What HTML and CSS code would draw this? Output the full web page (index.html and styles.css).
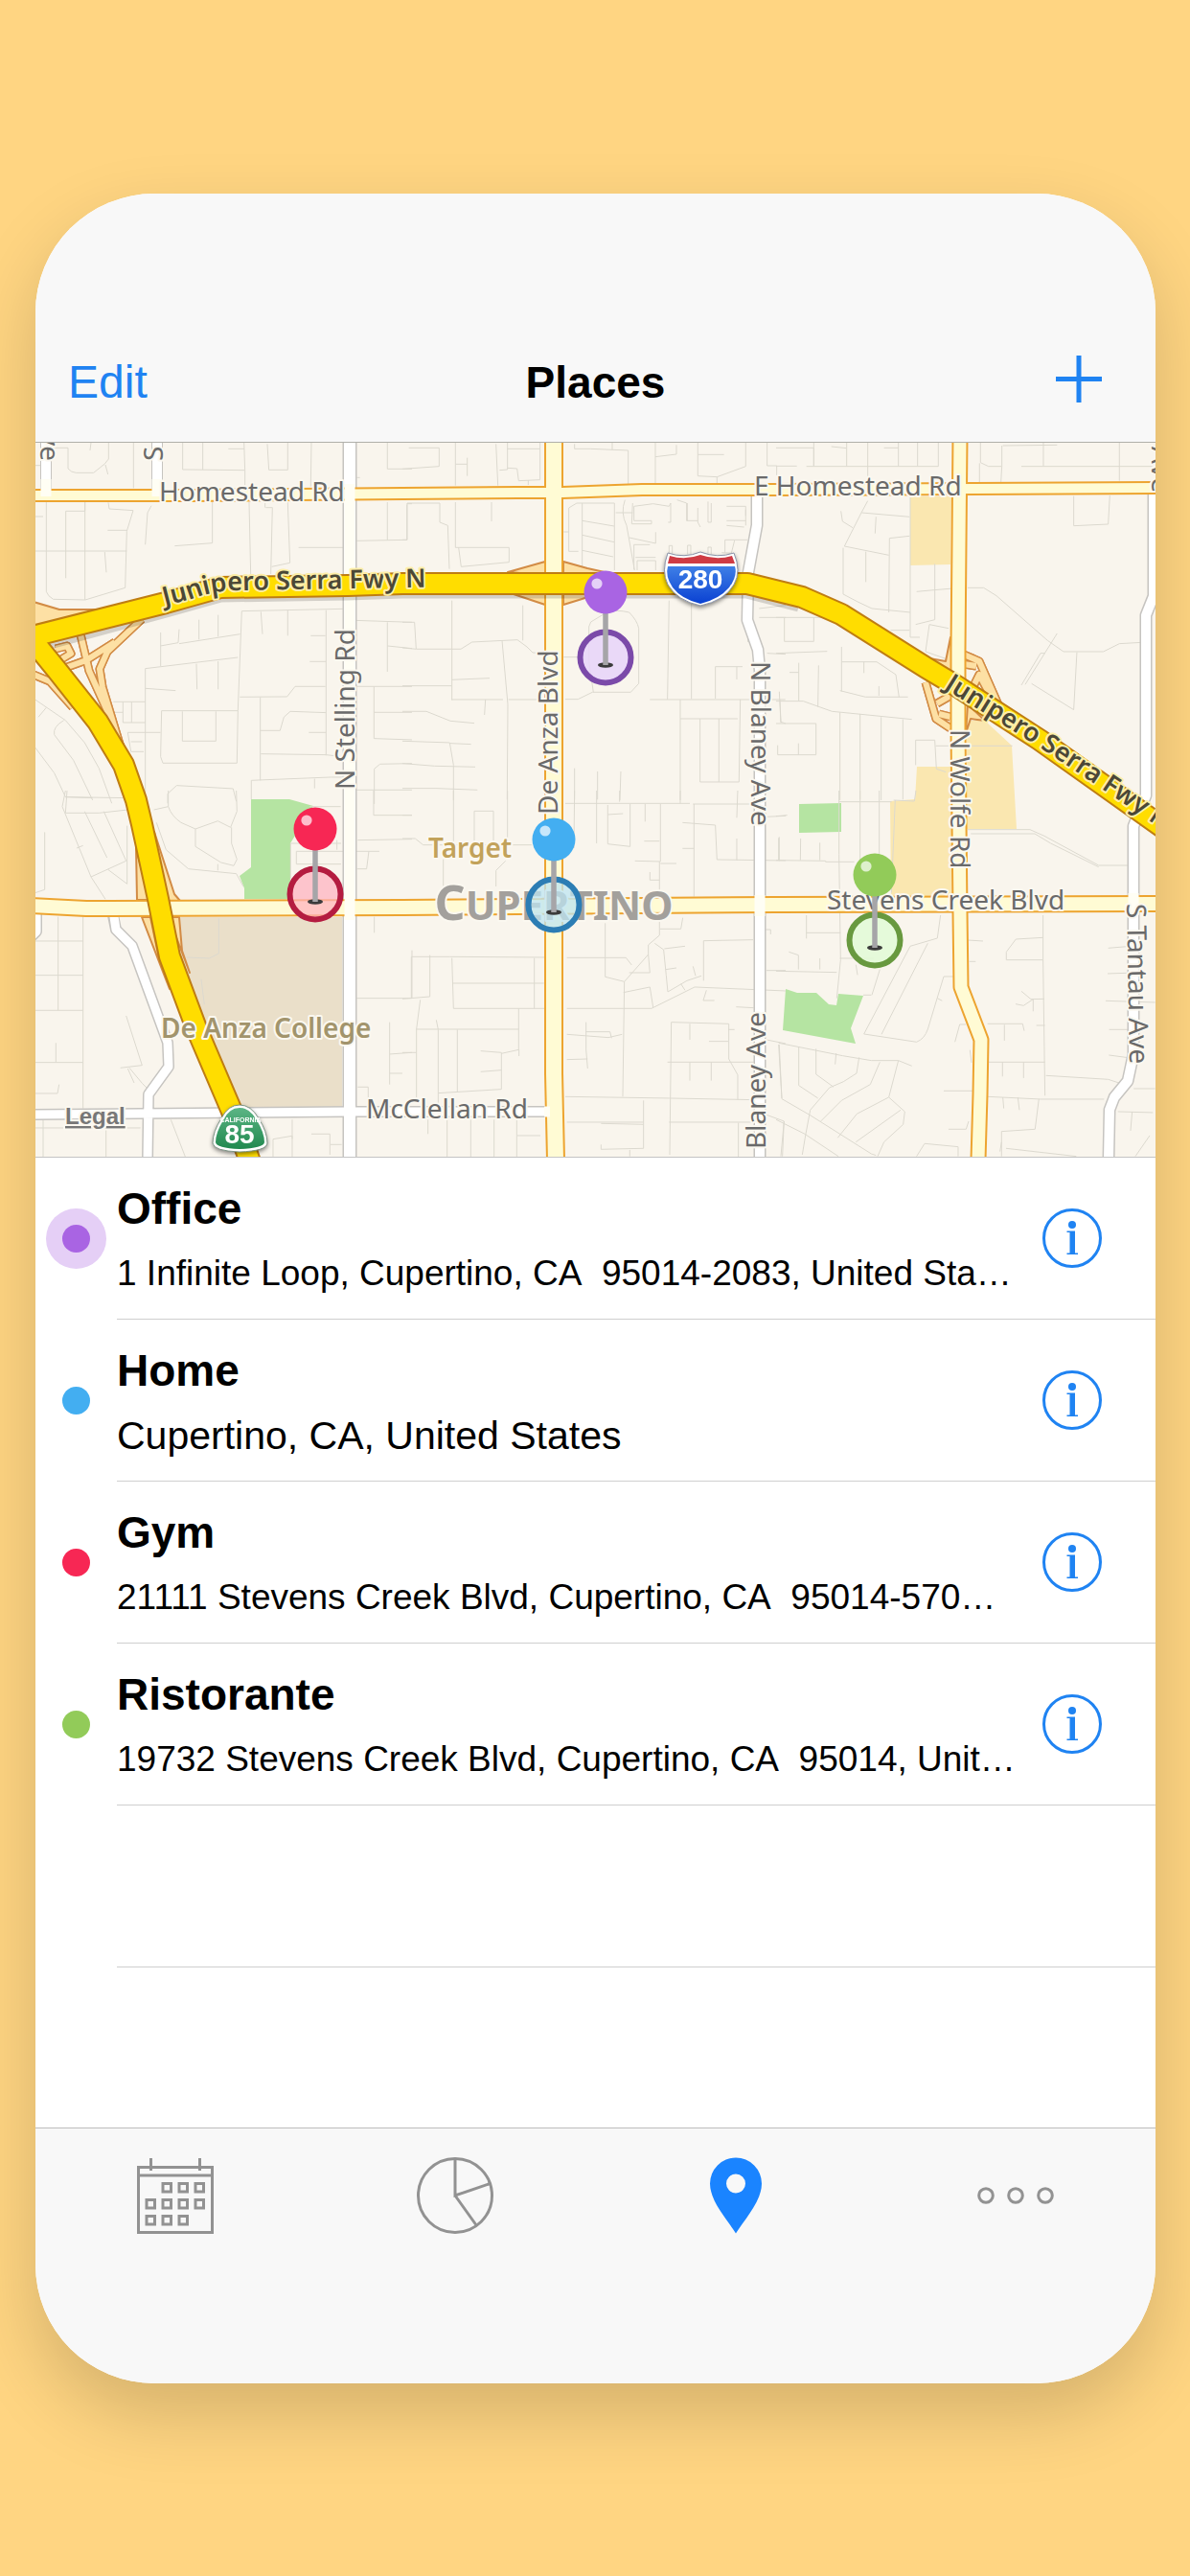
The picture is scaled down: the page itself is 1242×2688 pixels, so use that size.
FILE: index.html
```html
<!DOCTYPE html>
<html lang="en">
<head>
    <meta charset="UTF-8">
    <meta name="viewport" content="width=device-width, initial-scale=1.0">
    <title>Places</title>
    <link rel="stylesheet" href="styles.css">
</head>
<body>

<div class="phone">
    <header class="navbar">
        <button class="nav-edit" type="button">Edit</button>
        <h1>Places</h1>
        <button class="nav-add" type="button" aria-label="Add place">
            <svg viewBox="0 0 48 56"><path d="M24 0v49M0 24.500h48"/></svg>
        </button>
    </header>

    <!-- map -->
    <svg class="map" viewBox="37 462 1169 745" role="img" aria-label="Map of Cupertino">
        <defs>
            <linearGradient id="blueShield" x1="0" y1="0" x2="0" y2="1">
                <stop offset="0" stop-color="#3f7fe6"/>
                <stop offset="1" stop-color="#0a41d2"/>
            </linearGradient>
            <linearGradient id="greenShield" x1="0" y1="0" x2="0" y2="1">
                <stop offset="0" stop-color="#5cb585"/>
                <stop offset="1" stop-color="#21894f"/>
            </linearGradient>
            <symbol id="pin" overflow="visible">
                <circle class="pin-ring" r="26.500"/>
                <ellipse cy="8" rx="8" ry="2.700" fill="#3b3b3b"/>
                <path d="M0-48V8" stroke="#a6a5a8" stroke-width="5.500"/>
                <circle class="pin-head" cy="-68" r="22.500"/>
                <circle cx="-9" cy="-77" r="5.600" fill="#fff" opacity=".7"/>
            </symbol>
            <path id="fwyWest" d="M172 632L203 624Q225 616 250 616L480 612"/>
            <path id="fwyEast" d="M985 718L1093 785L1290 917"/>
        </defs>

        <!-- areas -->
        <path class="park" d="M262 834H302L327 841L303 880V938H255V927L250 914L262 905ZM834 839L878 838V868L834 869ZM820 1032L832 1036H852L865 1048L873 1049L875 1037L901 1039L888 1073L893 1089L817 1075Z"/>
        <path class="campus" d="M186 957H357V1156H246L188 1000Z"/>
        <path class="mall" d="M950 518H993L992 589L950 590ZM957 800H993V936H930L929 836L955 834ZM1009 752H1028L1056 778L1061 865H1009Z"/>

        <!-- minor streets -->
        <g class="minor" transform="translate(30 455) scale(.3333)">
            <path d="M75 37h48v65q10 12 25 13h55l35-28 12-15V18M192 45l3-25M328 18v145M240 90l8 30M20 92h20M482 18v87l195 2-3-89M545 18v87M625 40h50M677 107v50M747 25l5 81h59V18M885 18l-2 140M1123 18v85h77M1027 130h10"/>
            <path d="M20 252h25M55 207v280q5 15 22 24l100 2 125-38 5-177 20-65-75-5-3-20M116 235v210M116 235h60V207M176 207v306M20 360h287M247 295h60M238 363l5 64M365 340l7-100 12-22M457 344l118-9V207M690 207l5 225M742 224h21l-5 208M740 210v14M811 207l7 190-57 12M845 349h143M1027 328l157-3V215M1123 207v118M1184 212h16"/>
            <path d="M667 548l320-7M667 548l-12 312-3 164H420l-7-20 3-144h239M413 615v105M413 657l55-10 3-42M471 650l191-30M533 575v62M593 560v68M365 728l290-35M365 728v410M525 713l2 80M593 705v88M365 790l95 7M727 550l5 70M811 545v80M883 625h46M931 545v455M880 706h51M661 817l148-1 25-32h95M1027 784h173M1081 784v163l119 4M1081 865h119M1017 577l183 6M1123 583v155M1123 657l77 8M725 818v260M725 922h62l12-42 20-18 112 4M877 928h54M727 995l204 3 45 5M697 1138v-60l250-10h35M895 1073v30M1200 1025l-100 2-18 15v110M1027 1108h173"/>
            <path d="M265 832h100M295 832v65h70M265 865h30M322 832v65M481 862v93h105v-93M310 928h103M310 928l10 60h40M320 957h35M30 880l25-30M20 825l95 65 60 70 45 80 40 110M110 890q-35 20-30 45l60 80 60 125M20 975l60 80 35 75 85 3M435 1150v-30l28-26 177 10 10 40"/>
        </g>
        <g class="minor" transform="translate(420 455) scale(.3333)">
            <path d="M20 37h95v58L0 103M166 18v137M166 88h37M203 68v57M293 25l6 130M329 18v87l-25 2M329 100l30 2 5 38 67-3V18M329 40h103M394 138v15M539 25v15h50l118 5v110M657 18v25M792 65l66-8V28M792 18v137M925 18v107l60 3 90-33V18M925 58h82M985 128v20M1142 18v75h30v30"/>
            <path d="M15 210v115H0M15 210h102v60l25 10 5 136M166 207v142h168v46l-150 14-8-60M279 207v60M521 225v136h30M505 300h16M521 225l25-15h118v210M563 210v205M563 265l100 17M563 310l100 22M563 358l97 20M668 240h53M697 200q-15 40 5 80l25 140M721 210l-3 65h62v-10h-55v-45l60-8 50 8 5-10v60h-8M860 200l30 10v55h35M892 210v55M957 205v65h10v-60M925 225v45l8 15M1015 220h60v30M1015 265h60M1015 280l55 5M1075 230v50M710 318l83 18v-35M725 418v-78h50M730 380h63M735 420v-30h58v30M835 370v-27h10v25M893 370v-28h10v28M957 370v-22h10v22M1080 325h-70v40M1000 365l30 2 10-40"/>
            <path d="M155 515v312M0 583h38l5 84M0 663l43 4h140l35-22 142-7 30 22 18 18 35 3M155 763l118-5M0 782h155M312 640l18 200-2 298M155 825h160M260 825l-3 48M377 530v110M332 825h115M510 824h40l45-22h120l25-27V602q-5-25-30-50-40-10-70 0l-50 30-6 15v110l14 95M505 692h60M835 515l-5 310M775 825h424M905 515v308M980 822V722h85M1047 722v40M870 825v315M870 885h180M932 885v198h122l4-258M991 885v198M0 862h75l75 30 75 7M0 955l148 5 12 70v110M150 962l65 3M0 1025l100 8 128 3M0 1103h105l130 5M539 1040v98M611 1050v88M684 1050l-3 90M1117 568h83M1117 540l83-10M1082 600v45M1142 680l58 3M1182 825l3 70 15 5"/>
        </g>
        <g class="minor" transform="translate(810 455) scale(.3333)">
            <path d="M0 37h118v57M118 18v76M0 94h65M95 95h413V18M173 33l48 5v57M221 18v20M287 18v122M338 37h45M383 18v76M443 18v76M640 18v65l25 12h42V30M637 85v60M710 30l170-2M837 18v76M768 95h410M1075 18v122M707 95l-3 50"/>
            <path d="M203 235l5 32 32 20M287 203l-20 37-53 105 139 28M210 350v145q45 25 90 45l120 12M281 362v95M268 240l150 13M313 253l-3 52M420 190v440h30M418 313l-63 7-2 232M497 400v175l-60 15M440 487l55-5 60-5M480 590l60 12M480 590l-12 85 63 22M358 608h60M932 188v93l108-5 5-90M1168 190v210"/>
            <path d="M600 475h50l40 25 160 140 50 35h125l50-25 72-4M880 618l-100 160M768 780l60-100h15M800 775l132 82 10-180M0 568h200M26 568v75h92v-75M0 680l160-6M71 710v120M42 740h28M133 718l-2 130M205 660v140M205 707h110l60 40 10 70M275 707v35M200 797l80 20h133M322 783v30M0 830h85l90 32 250 25M200 865v275M263 870v268M329 880v260M397 887v251M0 900h125v98H5v-30M70 962v36M10 800l5 98M437 1030v-78h60l5 90 30 10M500 970h60M610 970h130"/>
        </g>
        <g class="minor" transform="translate(30 825) scale(.3333)">
            <path d="M120 0l-5 70h105l90-10M115 0l-10 50 90 220 45 70M115 20l200 3M175 65l70 145M235 65l70 155-110 50M308 110v182l-60-45M150 180l20-8M50 130v180l-30 10M437 0v50q10 30 40 50l45 20 70-25 40 20 20-50-2-65M522 120v55l80 50 40 10 10-20-17-50v-50M437 50l-45 10M400 100l30 85 70 60 150 15 22 40M592 230v20M820 165h158M820 165v110M838 190h260M838 190v40h140M880 50h97M1080 0v77h120M1030 155l170-3M1065 190l-7 55h-30M965 155v30"/>
            <path d="M20 471h150M92 395v293M170 395v600M20 578h150M20 688h150M20 851h150M85 790v60M95 920l-5 28H20M1082 395v50M1027 650h173M1200 500v150M1130 725v195M1200 820l-70 5M1130 885h40M1030 928h33v65M305 705l50 155-68 8M315 868l40 48 15 15M310 870l20 45M595 400v110l-30 15-70-3M540 590l10 80M45 1030v116M20 1056h330M242 1030v116M445 1030l45 116M765 1146v-55l60-10v65M885 1075h58v65M945 1108h35M825 1030v60"/>
        </g>
        <g class="minor" transform="translate(420 825) scale(.3333)">
            <path d="M160 0v165M225 165V64h60v101M329 0v165M0 77h30M0 150h40l25 20h340M128 215v90M293 300v-50l30-30M510 40h390M539 0l-2 180M608 0v165M680 0v35M643 45v122l70 8V42M643 75l48-3M760 42v55M808 42v180l-80-2M757 158h48M870 0v40M913 42v290M1100 42H910M877 100l103 8 5 108 215 3M877 181h36M808 228h50M775 255v25h30M1050 0l-3 85M1047 150v68M1140 82l60-3M1180 145v75"/>
            <path d="M28 520h120l300 2M28 520v130M86 515v130l-86 7M155 524l5 158h285M157 603h286M413 524v158M56 655l-12 92v215M44 747h320V682M106 718l6 30v230M172 748v195M112 947l198-12V820l-65-5M310 823l55-12v20M0 820h44M245 880l65-5M364 747v65M515 523h185l18 23M635 415v168l60 15-5 360M515 682h265l135-67 285 12M695 598l75-85v-30l35-30V222M770 513l5 57h-65M790 478l28 20 8 80 5 52 60-35 45-15M820 495l65-8M825 560l33-5M807 433h65l6-35M910 550l8 30M872 605l13 20M692 632l83-17 10 63M943 595V470l155-3M952 625l-10 32h35M1045 677l55 3M1140 563h60M1135 435h18v15"/>
            <path d="M515 763l130 10 43-10M575 725v85l5 60M575 755h75l5 20M515 842l65-2M510 958l325 5 265 5M842 725l180 5v110l28 50v78M842 725l-5 415M900 730v50M1040 748h-20M960 785h60M830 850h270M900 850v58M967 850v58M755 970v150l-133 3v-15M622 1042l133 3M515 1038h240M835 1038h265M1052 1040v106M712 1125v20M80 1030v45M140 1030v116M214 1030v116M287 1030v116M358 1030v116M360 1080h72M1140 780l60 12M1180 795l8 168M1140 1015l55 20-5 110"/>
        </g>
        <g class="minor" transform="translate(810 825) scale(.3333)">
            <path d="M0 80l35-3M8 148v70M77 150l-1 68M137 163v55M0 218l155 2v3h90M197 0v200l5 330-12 120M197 35h165M263 0v222M323 0v200M368 30l65 3 5-33M373 30l-12 290M600 122h195l45 20 170 92h95M610 135h200l50 30 150 74M95 390v73M95 445h107M40 505l30 10v45M0 565l190 4M137 525v35M200 525h105M250 545l5 32M515 390l-10 72-85 25-145 275 165 25q25-10 35-40l50-165h30M325 560l-25 80M475 478l-145 285M505 650l15 8M600 468l48 3M836 390v140h-115v-25l30-40 85-5M836 530l6 425M605 535h20M768 628l30 25 42-1M750 668l25 5 30-20v38M1040 493l60-5M1038 573l60-2M1032 658l155 5M1043 748h60M1042 828l60 8M662 730h110l5 22M715 733v50M575 732h20M575 732l-15 55M662 850h180M709 850v45M775 850v50M815 735h27"/>
            <path d="M8 790l200 40 90 15h85l42 17M8 795l10 170 90 52 190 120 15 5M71 803v120l60 40M125 808v80l55 40M188 822l-3 35M260 835l-8 50q-40 30-85 45l-60 70-15 80-10 60M325 850l-30 70-90 50-65 65M383 845l-30 115-100 52-60 75M353 960l50 45-5 40-60 55-20 45M0 1030l90 45 105 70M25 1035l-10 110M390 1000l-140 100M525 940h95M540 1060h55l8-25M845 892l195 12 60 20M662 958l165 8h200M710 960l3 35M757 960l5 40M823 965l-12 95-105 7v78M706 1100l-5 30M440 1145l25-40 105 10v30M720 1120l220 25M1070 1005l110 3M1115 1005l-5 60M1170 1080l-45 65M1120 933h67M607 812l5 40M273 640h25"/>
        </g>

        <!-- white roads -->
        <g class="road-edge">
            <path d="M48 455V512M164 455V512" stroke-width="12"/>
            <path d="M365 455V1210" stroke-width="15"/>
            <path d="M790 517V548L781 597L780 647L791 678L793 700V1210" stroke-width="13"/>
            <path d="M1204 515V622L1196 642V830L1183 862V1100L1177 1128L1163 1145L1158 1158L1157 1210" stroke-width="13"/>
            <path d="M118 955L121 970L138 987L175 1088L176 1113L155 1142L154 1210M30 1163L365 1160H575M38 952V972L30 980" stroke-width="12"/>
        </g>
        <g class="road-white">
            <path d="M48 455V516M164 455V516" stroke-width="10"/>
            <path d="M365 455V1210" stroke-width="12"/>
            <path d="M790 512V548L781 597L780 647L791 678L793 700V1210" stroke-width="10"/>
            <path d="M1204 515V622L1196 642V830L1183 862V1100L1177 1128L1163 1145L1158 1158L1157 1210" stroke-width="10"/>
            <path d="M118 950L121 970L138 987L175 1088L176 1113L155 1142L154 1210M30 1163L365 1160H578M38 952V972L30 980" stroke-width="9"/>
        </g>

        <!-- ramps -->
        <g class="ramp">
            <path d="M35 628L62 636H110L35 662Z"/>
            <path d="M142 885L143 939H156ZM161 868L182 933L188 940H172ZM148 957L177 1032L167 1005L157 957ZM176 957H187L190 992L198 1015Z"/>
            <path d="M530 597L569 586V600ZM588 586L613 593L640 599H588ZM533 619L569 631V618ZM588 631L627 619H588Z"/>
            <path d="M970 687L987 690L992 665L995 712ZM1008 765L1013 750L1028 752L1010 735Z"/>
        </g>
        <path id="rampLines" class="ramp-edge" d="M148 646L112 680L104 698L107 717L126 780M84 662L93 700L112 742L126 780M62 699L90 689L120 670M58 677L70 674L74 682L64 688M30 702L52 711L76 738M1006 683L1022 690L1044 740M1006 693L1019 695M1010 728L1022 704L1036 730M966 712L977 750L992 760M980 745L992 748M978 734L992 726"/>
        <use class="ramp-fill" href="#rampLines"/>
        <path class="ramp-fill" d="M148 646L112 680L104 698L107 717L126 780M84 662L93 700L112 742L126 780M62 699L90 689L120 670M58 677L70 674L74 682L64 688M30 702L52 711L76 738M1006 683L1022 690L1044 740M1006 693L1019 695M1010 728L1022 704L1036 730M966 712L977 750L992 760M980 745L992 748M978 734L992 726"/>

        <!-- main roads -->
        <g class="main-edge">
            <path d="M30 517H200L420 515L540 514H587L670 511L810 511L1210 509" stroke-width="14"/>
            <path d="M30 945L90 948H113L420 947L810 944L1210 943" stroke-width="18"/>
            <path d="M578 455V1120L580 1210" stroke-width="20"/>
            <path d="M1002 455L1000 678V762L1002 952L1003 1030L1024 1085L1023 1142L1021 1210" stroke-width="17"/>
        </g>
        <g class="main-fill">
            <path d="M30 517H200L420 515L540 514H587L670 511L810 511L1210 509" stroke-width="10"/>
            <path d="M30 945L90 948H113L420 947L810 944L1210 943" stroke-width="14"/>
            <path d="M578 455V1120L580 1210" stroke-width="16"/>
            <path d="M1002 455L1000 678V762L1002 952L1003 1030L1024 1085L1023 1142L1021 1210" stroke-width="13"/>
        </g>
        <!-- white crossings over the main roads -->
        <path class="crossing" d="M365 505V960M793 934V956M1183 932V955M48 500V518M164 500V518M574 1160H568"/>

        <!-- freeways -->
        <path class="fwy-shadow" d="M37 670L173 633L230 617L363 615L420 613H780L835 627"/>
        <g class="fwy-edge">
            <path d="M30 663L60 700L102 753L129 798L142 835L148 860L165 938L177 998L205 1073L243 1162L262 1215"/>
            <path d="M30 665L173 629L230 613L363 611L420 609H780L837 623L878 641L967 697L997 715L1085 772L1220 868"/>
        </g>
        <g class="fwy-fill">
            <path d="M30 663L60 700L102 753L129 798L142 835L148 860L165 938L177 998L205 1073L243 1162L262 1215"/>
            <path d="M30 665L173 629L230 613L363 611L420 609H780L837 623L878 641L967 697L997 715L1085 772L1220 868"/>
        </g>

        <!-- labels -->
        <g class="label">
            <text x="166" y="523">Homestead Rd</text>
            <text x="787" y="517">E Homestead Rd</text>
            <text x="863" y="949">Stevens Creek Blvd</text>
            <text x="382" y="1167">McClellan Rd</text>
            <text transform="translate(370 824) rotate(-90)">N Stelling Rd</text>
            <text transform="translate(582 850) rotate(-90)">De Anza Blvd</text>
            <text transform="translate(784 690) rotate(90)">N Blaney Ave</text>
            <text transform="translate(799 1199) rotate(-90)">Blaney Ave</text>
            <text transform="translate(992 761) rotate(90)">N Wolfe Rd</text>
            <text transform="translate(1176 943) rotate(89)">S Tantau Ave</text>
            <text transform="translate(42 481) rotate(90)" text-anchor="end">Ave</text>
            <text transform="translate(170 481) rotate(-90)">S</text>
            <text transform="translate(1202 514) rotate(90)" text-anchor="end">Ave</text>
        </g>
        <g class="label-fwy">
            <text><textPath href="#fwyWest">Junipero Serra Fwy N</textPath></text>
            <text><textPath href="#fwyEast">Junipero Serra Fwy N</textPath></text>
        </g>
        <text class="label-poi target" x="447" y="895">Target</text>
        <text class="label-poi college" x="168" y="1083">De Anza College</text>
        <text class="label-city" x="578" y="960" text-anchor="middle"><tspan class="cap">C</tspan>UPERTINO</text>
        <a href="#legal"><text class="legal" x="68" y="1173">Legal</text></a>

        <!-- route shields -->
        <g class="shield">
            <path d="M697 577Q714 583 731 576Q749 583 766 577Q774 596 766 610Q756 627 731 632Q707 627 697 610Q690 596 697 577Z" fill="#fff" stroke="#8a93a8" stroke-width="1"/>
            <path d="M699 580Q715 585 731 579Q748 585 764 580L767 588H697Z" fill="#cf3b44"/>
            <path d="M697 591H767Q770 601 761 613Q751 625 731 630Q711 625 702 613Q694 601 697 591Z" fill="url(#blueShield)"/>
            <text x="731" y="614" font-size="28">280</text>
        </g>
        <g class="shield">
            <path d="M250 1153Q262 1153 270 1167Q279 1181 279 1193Q278 1201 250 1202Q223 1201 222 1193Q222 1181 231 1167Q238 1153 250 1153Z" fill="#fff" stroke="#7d9384" stroke-width="1"/>
            <path d="M250 1156Q261 1156 268 1169Q276 1182 276 1192Q275 1198 250 1199Q226 1198 225 1192Q225 1182 233 1169Q239 1156 250 1156Z" fill="url(#greenShield)"/>
            <text x="251" y="1171" font-size="7">CALIFORNIA</text>
            <text x="250" y="1193" font-size="28">85</text>
        </g>

        <!-- pins -->
        <use class="purple" href="#pin" x="632" y="686"/>
        <use class="red" href="#pin" x="329" y="933"/>
        <use class="blue" href="#pin" x="578" y="944"/>
        <use class="green" href="#pin" x="913" y="981"/>
    </svg>

    <!-- places list -->
    <ul class="places">
        <li class="place">
            <span class="dot-col"><span class="dot purple selected"></span></span>
            <div class="place-body">
                <div class="place-text">
                    <h2>Office</h2>
                    <p>1 Infinite Loop, Cupertino, CA&nbsp; 95014-2083, United States</p>
                </div>
                <button class="info" type="button" aria-label="Office details">
                    <svg viewBox="0 0 62 62"><circle class="info-ring" cx="31" cy="31" r="29.500"/><circle cx="31" cy="17" r="4"/><path d="M25.500 23.500H34V46.500H37V48H25.500V46.500H28.500V25H25.500Z"/></svg>
                </button>
            </div>
        </li>
        <li class="place">
            <span class="dot-col"><span class="dot blue"></span></span>
            <div class="place-body">
                <div class="place-text">
                    <h2>Home</h2>
                    <p class="short">Cupertino, CA, United States</p>
                </div>
                <button class="info" type="button" aria-label="Home details">
                    <svg viewBox="0 0 62 62"><circle class="info-ring" cx="31" cy="31" r="29.500"/><circle cx="31" cy="17" r="4"/><path d="M25.500 23.500H34V46.500H37V48H25.500V46.500H28.500V25H25.500Z"/></svg>
                </button>
            </div>
        </li>
        <li class="place">
            <span class="dot-col"><span class="dot red"></span></span>
            <div class="place-body">
                <div class="place-text">
                    <h2>Gym</h2>
                    <p>21111 Stevens Creek Blvd, Cupertino, CA&nbsp; 95014-570…</p>
                </div>
                <button class="info" type="button" aria-label="Gym details">
                    <svg viewBox="0 0 62 62"><circle class="info-ring" cx="31" cy="31" r="29.500"/><circle cx="31" cy="17" r="4"/><path d="M25.500 23.500H34V46.500H37V48H25.500V46.500H28.500V25H25.500Z"/></svg>
                </button>
            </div>
        </li>
        <li class="place">
            <span class="dot-col"><span class="dot green"></span></span>
            <div class="place-body">
                <div class="place-text">
                    <h2>Ristorante</h2>
                    <p>19732 Stevens Creek Blvd, Cupertino, CA&nbsp; 95014, United States</p>
                </div>
                <button class="info" type="button" aria-label="Ristorante details">
                    <svg viewBox="0 0 62 62"><circle class="info-ring" cx="31" cy="31" r="29.500"/><circle cx="31" cy="17" r="4"/><path d="M25.500 23.500H34V46.500H37V48H25.500V46.500H28.500V25H25.500Z"/></svg>
                </button>
            </div>
        </li>
        <li class="place" aria-hidden="true">
            <span class="dot-col"></span>
            <div class="place-body"></div>
        </li>
    </ul>

    <!-- tab bar -->
    <nav class="tabbar">
        <button class="tab" type="button" aria-label="Calendar">
            <svg viewBox="0 0 80 80">
                <path d="M1.500 10.500H78.500V78.500H1.500ZM1.500 19H78.500M14.500 1V14M65.500 1V14"/>
                <path d="M27 27.500h8.500v8.500H27ZM44 27.500h8.500v8.500H44ZM61 27.500h8.500v8.500H61ZM10 44.500h8.500v8.500H10ZM27 44.500h8.500v8.500H27ZM44 44.500h8.500v8.500H44ZM61 44.500h8.500v8.500H61ZM10 61.500h8.500v8.500H10ZM27 61.500h8.500v8.500H27ZM44 61.500h8.500v8.500H44Z"/>
            </svg>
        </button>
        <button class="tab" type="button" aria-label="Statistics">
            <svg viewBox="0 0 80 80">
                <circle cx="40" cy="40" r="38.500"/>
                <path d="M40 1.500V40L76.500 27.500M40 40L62.500 71.500"/>
            </svg>
        </button>
        <button class="tab active" type="button" aria-label="Places">
            <svg viewBox="0 0 80 80">
                <path fill-rule="evenodd" d="M40 79.500C31 65 13 46 13 27.500A27 27 0 0 1 67 27.500C67 46 49 65 40 79.500ZM40 17.500A10 10 0 1 0 40 37.500A10 10 0 1 0 40 17.500Z"/>
            </svg>
        </button>
        <button class="tab" type="button" aria-label="More">
            <svg viewBox="0 0 80 80">
                <circle cx="9" cy="40" r="7.300"/><circle cx="40" cy="40" r="7.300"/><circle cx="71" cy="40" r="7.300"/>
            </svg>
        </button>
    </nav>
</div>

</body>
</html>
```

FILE: styles.css
```css
* {
    box-sizing: border-box;
}
body {
    margin: 0;
    padding: 202px 36px 201px 37px;
    min-height: 100vh;
    display: flex;
    background-color: #ffd582;
    font-family: "Liberation Sans", Arial, sans-serif;
    color: #000;
}
button {
    padding: 0;
    border: none;
    background: none;
    font: inherit;
    color: #1f83f2;
    cursor: pointer;
}
.phone {
    flex: 1;
    min-width: 0;
    display: flex;
    flex-direction: column;
    overflow: hidden;
    border-radius: 124px;
    background-color: #fff;
    box-shadow: 0 32px 76px rgba(0, 0, 0, 0.17);
}

/* pin and dot colours */
.purple {
    --main: #a964e3;
    --ring: #7b4aa9;
    --inside: rgba(231, 212, 249, 0.85);
}
.blue {
    --main: #43aef1;
    --ring: #2c7db4;
    --inside: rgba(190, 228, 240, 0.75);
}
.red {
    --main: #f72754;
    --ring: #b41c40;
    --inside: rgba(255, 175, 190, 0.7);
}
.green {
    --main: #92cb59;
    --ring: #68993f;
    --inside: rgba(226, 250, 214, 0.85);
}

/* top bar */
.navbar {
    display: grid;
    grid-template-columns: 1fr auto 1fr;
    padding: 169px 34px 34px;
    background-color: #f8f8f8;
    border-bottom: 1px solid #b0b0aa;
    font-size: 48px;
    line-height: 56px;
}
.navbar h1 {
    margin: 0;
    font-size: 46px;
    font-weight: bold;
}
.nav-edit {
    justify-self: start;
}
.nav-add {
    justify-self: end;
    margin-right: 22px;
    width: 48px;
    height: 56px;
}
.nav-add svg {
    display: block;
    fill: none;
    stroke: #1f83f2;
    stroke-width: 5;
}

/* map */
.map {
    display: block;
    width: 100%;
    background-color: #f9f5ed;
    font-family: "Noto Sans", sans-serif;
}
.map path {
    stroke-linejoin: round;
}
.park {
    fill: #b5e4a2;
}
.campus {
    fill: #eadfc9;
}
.mall {
    fill: #fae7b0;
}
.minor {
    fill: none;
    stroke: #dcd9cf;
    stroke-width: 3;
}
.road-edge,
.road-white,
.main-edge,
.main-fill,
.fwy-edge,
.fwy-fill,
.fwy-shadow,
.crossing {
    fill: none;
}
.road-edge {
    stroke: #c6c4c0;
}
.road-white {
    stroke: #fff;
}
.main-edge {
    stroke: #eda430;
}
.main-fill {
    stroke: #fffbd4;
}
.crossing {
    stroke: #fffef4;
    stroke-width: 11;
}
.ramp {
    fill: #fde0a4;
    stroke: #d28b45;
    stroke-width: 2;
}
.ramp-edge {
    fill: none;
    stroke: #d28b45;
    stroke-width: 9;
}
.ramp-fill {
    fill: none;
    stroke: #fde0a4;
    stroke-width: 6;
}
.fwy-shadow {
    stroke: rgba(0, 0, 0, 0.15);
    stroke-width: 23;
}
.fwy-edge {
    stroke: #bf7d12;
    stroke-width: 24;
}
.fwy-fill {
    stroke: #ffdd00;
    stroke-width: 20;
}
.map text {
    paint-order: stroke;
    stroke-linejoin: round;
    stroke: #fbf8f0;
    stroke-width: 4;
}
.label {
    font-size: 28px;
    fill: #6a6a6a;
}
.label-fwy {
    font-size: 27px;
    font-weight: 600;
    fill: #4b4736;
}
.map .label-fwy text {
    stroke: #fdeea8;
}
.label-poi {
    font-size: 28px;
    font-weight: 600;
}
.target {
    fill: #c2a25a;
}
.college {
    fill: #a2946c;
}
.label-city {
    font-size: 42px;
    font-weight: bold;
    fill: #a3a09c;
}
.label-city .cap {
    font-size: 50px;
}
.legal {
    font-family: "Liberation Sans", Arial, sans-serif;
    font-size: 24px;
    font-weight: bold;
    fill: #777;
    text-decoration: underline;
}
.map .shield text {
    font-family: "Liberation Sans", Arial, sans-serif;
    font-weight: bold;
    text-anchor: middle;
    fill: #fff;
    stroke: none;
}
.shield {
    filter: drop-shadow(0 2px 2px rgba(0, 0, 0, 0.45));
}
.pin-ring {
    fill: var(--inside);
    stroke: var(--ring);
    stroke-width: 6;
}
.pin-head {
    fill: var(--main);
}

/* list */
.places {
    flex: 1;
    margin: 0;
    padding: 0;
    list-style: none;
    border-top: 1px solid #c4c4c4;
}
.place {
    display: flex;
    min-height: 169px;
}
.dot-col {
    flex: 0 0 85px;
    display: flex;
    align-items: center;
    justify-content: center;
}
.dot {
    width: 29px;
    height: 29px;
    border-radius: 50%;
    background-color: var(--main);
}
.dot.selected {
    box-shadow: 0 0 0 17px #e5cff6;
}
.place-body {
    flex: 1;
    min-width: 0;
    display: flex;
    align-items: center;
    gap: 26px;
    padding-right: 56px;
    border-bottom: 1px solid #cfcfcf;
}
.place-text {
    flex: 1;
    min-width: 0;
    padding-top: 5px;
    line-height: 60px;
}
.place-text h2 {
    margin: 0 0 8px;
    font-size: 46px;
    font-weight: bold;
}
.place-text p {
    margin: 0;
    font-size: 37px;
    overflow: hidden;
    white-space: nowrap;
    text-overflow: ellipsis;
}
.place-text .short {
    font-size: 41px;
}
.info {
    flex: 0 0 62px;
    height: 62px;
}
.info svg {
    display: block;
    fill: #1f83f2;
}
.info-ring {
    fill: none;
    stroke: #1f83f2;
    stroke-width: 3;
}

/* bottom tabs */
.tabbar {
    display: grid;
    grid-template-columns: repeat(4, 1fr);
    justify-items: center;
    padding: 30px 0 156px;
    background-color: #f8f8f8;
    border-top: 1px solid #bdbdbd;
}
.tab {
    width: 80px;
    height: 80px;
}
.tab svg {
    display: block;
    fill: none;
    stroke: #929292;
    stroke-width: 3;
}
.tab.active svg {
    fill: #1a84ff;
    stroke: none;
}
```
